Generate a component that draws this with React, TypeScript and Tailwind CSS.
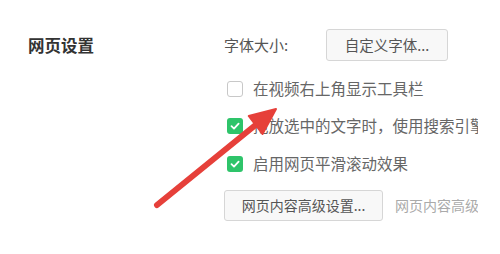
import React from "react";

const font = { fontFamily: '"Noto Sans CJK SC", "Noto Sans", sans-serif' };

function Check({ checked }: { checked: boolean }) {
  return checked ? (
    <span className="flex h-4 w-4 shrink-0 items-center justify-center rounded-[3px] bg-[#2ec46a]">
      <svg width="12" height="12" viewBox="0 0 12 12">
        <path d="M2.5 6.2 L5 8.6 L9.6 3.6" fill="none" stroke="white" strokeWidth="1.8" strokeLinecap="round" strokeLinejoin="round" />
      </svg>
    </span>
  ) : (
    <span className="block h-4 w-4 shrink-0 rounded-[3px] border border-[#c8c8c8] bg-white" />
  );
}

export default function App() {
  return (
    <div className="relative h-[254px] w-[500px] overflow-hidden bg-white text-[15px] text-[#555]" style={font}>
      <div className="flex pt-[29px]">
        <div className="w-[224px] shrink-0 pl-[28px]">
          <div className="flex h-8 items-center text-[16.5px] font-bold text-[#333]">网页设置</div>
        </div>
        <div className="w-[254px] overflow-hidden whitespace-nowrap">
          <div className="flex h-8 items-center">
            <span className="w-[102px] text-[#555]">字体大小:</span>
            <span className="flex h-8 w-[122px] items-center justify-center rounded-[3px] border border-[#d6d6d6] bg-[#f8f8f8] text-[14.5px] text-[#555]">
              自定义字体...
            </span>
          </div>
          <div className="mt-[12px] flex h-[32px] items-center gap-[10px] pl-[3px]">
            <Check checked={false} />
            <span className="text-[15.5px] text-[#666]">在视频右上角显示工具栏</span>
          </div>
          <div className="mt-[5px] flex h-[32px] items-center gap-[10px] pl-[3px]">
            <Check checked={true} />
            <span className="text-[15.5px] text-[#666]">拖放选中的文字时，使用搜索引擎搜索</span>
          </div>
          <div className="mt-[6px] flex h-[32px] items-center gap-[10px] pl-[3px]">
            <Check checked={true} />
            <span className="text-[15.5px] text-[#666]">启用网页平滑滚动效果</span>
          </div>
          <div className="mt-[10px] flex h-[31px] items-center">
            <span className="flex h-[31px] w-[159px] shrink-0 items-center justify-center overflow-hidden rounded-[3px] border border-[#d6d6d6] bg-[#f8f8f8] text-[14px] text-[#555]">
              网页内容高级设置...
            </span>
            <span className="ml-[12px] text-[14px] text-[#aaa]">网页内容高级设置</span>
          </div>
        </div>
      </div>
      <svg className="pointer-events-none absolute left-0 top-0" width="500" height="254" viewBox="0 0 500 254">
        <line x1="157" y1="205" x2="258" y2="123" stroke="#e6403a" strokeWidth="6" strokeLinecap="round" />
        <polygon points="276,109 262.5,134 248.7,116" fill="#e6403a" stroke="#e6403a" strokeWidth="2" strokeLinejoin="round" />
      </svg>
    </div>
  );
}
